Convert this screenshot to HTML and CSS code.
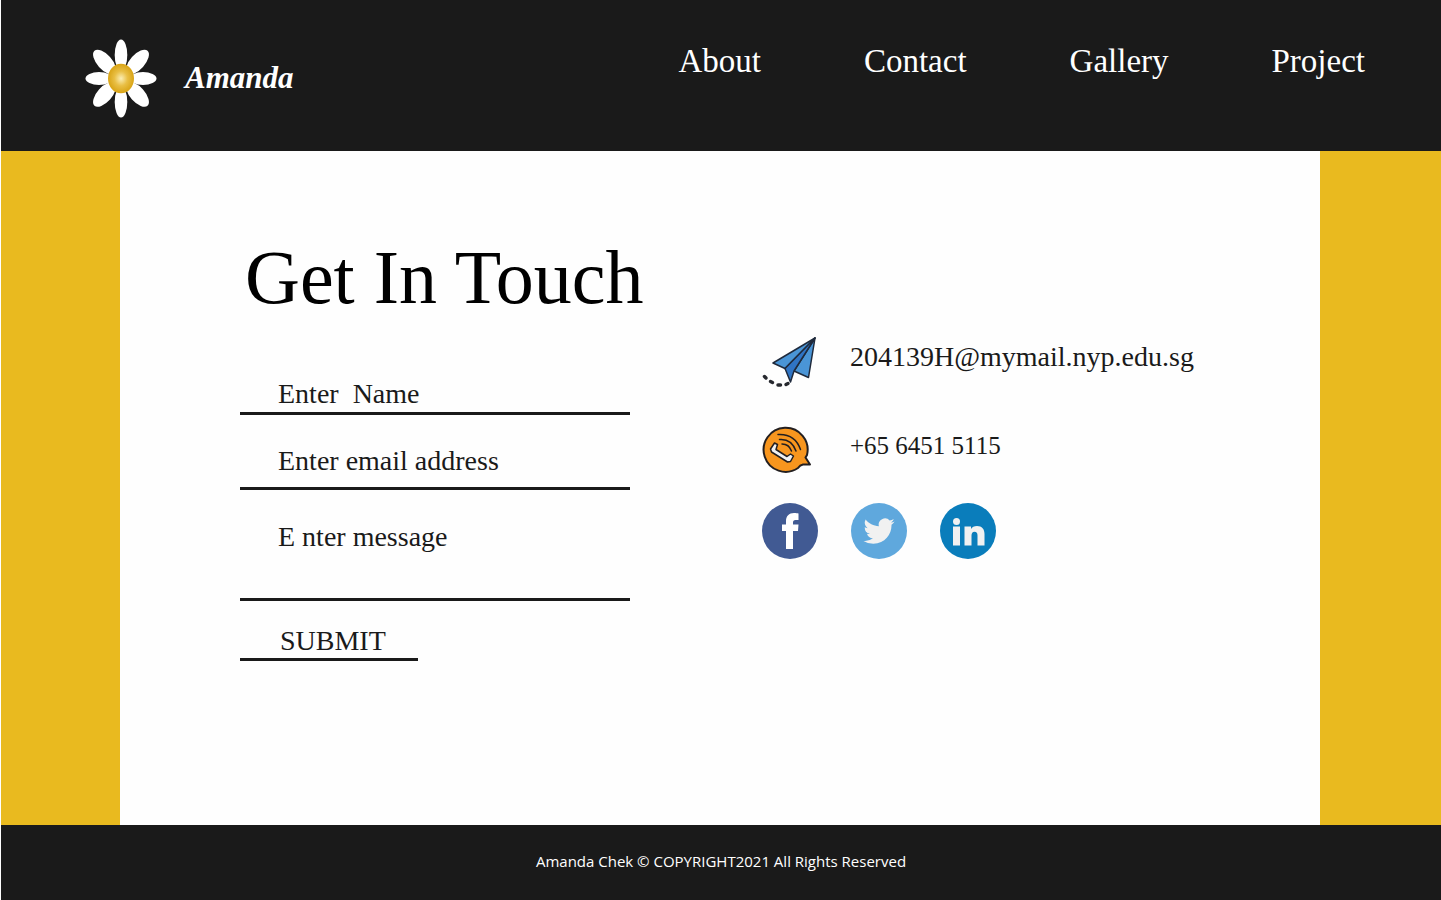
FILE: index.html
```html
<!DOCTYPE html>
<html lang="en">
<head>
  <meta charset="utf-8">
  <meta name="viewport" content="width=device-width, initial-scale=1">
  <title>Amanda – Contact</title>
  <link rel="stylesheet" href="styles.css">
</head>
<body>
  <header class="site-header">
    <a class="brand" href="#">
      <svg class="brand-mark" viewBox="0 0 72 80" aria-hidden="true">
        <defs>
          <radialGradient id="core">
            <stop offset="0" stop-color="#fbeeb4"/>
            <stop offset="0.5" stop-color="#e9bf45"/>
            <stop offset="1" stop-color="#d9a415"/>
          </radialGradient>
        </defs>
        <g fill="#fff">
          <ellipse cx="36" cy="17" rx="6.300" ry="15.500"/>
          <ellipse cx="36" cy="64" rx="6.300" ry="15.500"/>
          <ellipse cx="14" cy="40.500" rx="13.500" ry="6.500"/>
          <ellipse cx="58" cy="40.500" rx="13.500" ry="6.500"/>
          <ellipse cx="19.500" cy="24" rx="7.400" ry="15" transform="rotate(-42 19.500 24)"/>
          <ellipse cx="52.500" cy="24" rx="7.400" ry="15" transform="rotate(42 52.500 24)"/>
          <ellipse cx="19.500" cy="56.500" rx="7.400" ry="15" transform="rotate(42 19.500 56.500)"/>
          <ellipse cx="52.500" cy="56.500" rx="7.400" ry="15" transform="rotate(-42 52.500 56.500)"/>
        </g>
        <ellipse cx="36" cy="40.500" rx="13" ry="14.700" fill="url(#core)"/>
      </svg>
      <span class="brand-name">Amanda</span>
    </a>
    <nav class="site-nav" aria-label="Main">
      <a href="#about">About</a>
      <a href="#contact">Contact</a>
      <a href="#gallery">Gallery</a>
      <a href="#project">Project</a>
    </nav>
  </header>

  <main class="page">
    <div class="panel">
      <section class="touch">
        <h1 class="title">Get In Touch</h1>
        <form class="form">
          <input class="field field-name" type="text" aria-label="Name" placeholder="Enter  Name">
          <input class="field field-email" type="email" aria-label="Email address" placeholder="Enter email address">
          <textarea class="field field-message" rows="1" aria-label="Message" placeholder="E nter message"></textarea>
          <button class="submit" type="submit">SUBMIT</button>
        </form>
      </section>

      <section class="contact" aria-label="Contact details">
        <a class="contact-row" href="mailto:204139H@mymail.nyp.edu.sg">
          <svg class="contact-icon" viewBox="0 0 56 59" aria-hidden="true">
            <g stroke="#1f2a3c" stroke-width="1.500" stroke-linejoin="round">
              <path d="M53 2 11 27 23 32.500Z" fill="#4a95d6"/>
              <path d="M53 2 32 35 46.500 41.500Z" fill="#4a95d6"/>
              <path d="M53 2 23 32.500 28.500 46 32 35Z" fill="#2f74c4"/>
            </g>
            <path d="M2.500 40.500 4 42M8.500 45.500 10.500 46.500M16 49h2.500M24 48.500 26 47.500" fill="none" stroke="#26282e" stroke-width="3.500" stroke-linecap="round"/>
          </svg>
          <span>204139H@mymail.nyp.edu.sg</span>
        </a>
        <a class="contact-row phone" href="tel:+6564515115">
          <svg class="contact-icon" viewBox="0 0 56 48" aria-hidden="true">
            <path d="M45 30A22 22 0 1 0 36 43Q38 40 41 39.500L48 39.500 43.500 32.500Z" fill="#f8961e" stroke="#231f20" stroke-width="2" stroke-linejoin="round"/>
            <path d="M15.500 19.500 12.500 18 8.500 24 9.500 27 25.500 37 28.500 36.500 31.500 31 28.500 29 25 31.500 14 24.500Z" fill="#f1f1f1" stroke="#231f20" stroke-width="1.500" stroke-linejoin="round"/>
            <path d="M16 9.500q17-1 22.500 15M17.500 14.500q12-1 16.500 11.500M20 19q7 0 9.500 7" fill="none" stroke="#231f20" stroke-width="1.500" stroke-linecap="round"/>
          </svg>
          <span>+65 6451 5115</span>
        </a>
        <div class="social">
          <a href="#facebook" aria-label="Facebook">
            <svg class="social-icon" viewBox="0 0 56 56" aria-hidden="true">
              <circle cx="28" cy="28" r="28" fill="#415a93"/>
              <path d="M24 46V28H20v-6.500h4V18c0-5 3-8 8-8 2 0 3.500.200 4.500.500V17h-3c-1.800 0-2.500 1-2.500 2.500v2H36.500L36 28h-5v18Z" fill="#fff"/>
            </svg>
          </a>
          <a href="#twitter" aria-label="Twitter">
            <svg class="social-icon" viewBox="0 0 56 56" aria-hidden="true">
              <circle cx="28" cy="28" r="28" fill="#5fa8dd"/>
              <path transform="translate(12.500 12.500) scale(1.300)" d="M23.950 4.570a10 10 0 0 1-2.820.770 4.960 4.960 0 0 0 2.160-2.720 10 10 0 0 1-3.130 1.190 4.920 4.920 0 0 0-8.380 4.480C7.690 8.090 4.070 6.130 1.640 3.160a4.920 4.920 0 0 0 1.520 6.570 4.900 4.900 0 0 1-2.230-.610v.060a4.920 4.920 0 0 0 3.950 4.830 5 5 0 0 1-2.210.080 4.940 4.940 0 0 0 4.600 3.420A9.870 9.870 0 0 1 0 19.540a14 14 0 0 0 7.550 2.210c9.050 0 14-7.500 14-13.980l-.020-.640a10 10 0 0 0 2.420-2.560Z" fill="#f1f1f1"/>
            </svg>
          </a>
          <a href="#linkedin" aria-label="LinkedIn">
            <svg class="social-icon" viewBox="0 0 56 56" aria-hidden="true">
              <circle cx="28" cy="28" r="28" fill="#0a7dbb"/>
              <g fill="#f1f1f1">
                <circle cx="16.500" cy="18.500" r="3.500"/>
                <path d="M13 23.500h7V42.500h-7ZM24.500 23.500H31v2.500c1-2 3.200-3 6-3 5 0 7.500 3 7.500 8V42.500h-7V32.500c0-2.500-.900-3.700-3-3.700-2 0-3 1.400-3 3.700v10h-7Z"/>
              </g>
            </svg>
          </a>
        </div>
      </section>
    </div>
  </main>

  <footer class="site-footer">
    <p>Amanda Chek © COPYRIGHT2021 All Rights Reserved</p>
  </footer>
</body>
</html>
```
FILE: styles.css
```css
* {
  box-sizing: border-box;
}

body {
  display: flex;
  flex-direction: column;
  min-height: 100vh;
  margin: 0;
  padding-left: 1px;
  background: #fff;
  color: #1a1a1a;
  font-family: "Liberation Serif", "Times New Roman", serif;
  font-size: 28px;
  line-height: 32px;
}

a {
  color: inherit;
  text-decoration: none;
}

svg {
  display: block;
}

.site-header {
  display: flex;
  justify-content: space-between;
  align-items: flex-start;
  padding: 38px 76px 33px 84px;
  background: #1a1a1a;
  color: #fff;
}

.brand {
  display: flex;
  align-items: center;
  gap: 28px;
}

.brand-mark {
  width: 72px;
  height: 80px;
}

.brand-name {
  font-size: 31px;
  font-style: italic;
  font-weight: 700;
}

.site-nav {
  display: flex;
  gap: 103px;
  padding-top: 4px;
  font-size: 33px;
  line-height: 38px;
}

.page {
  display: flex;
  flex: 1;
  padding: 0 121px 0 119px;
  background: #e9ba1f;
}

.panel {
  display: grid;
  flex: 1;
  grid-template-columns: minmax(0, 390fr) minmax(0, 438fr);
  gap: 132px;
  align-items: start;
  padding: 82px 120px;
  background: #fefefe;
}

.title {
  margin: 0;
  padding-left: 5px;
  color: #000;
  font-size: 76px;
  font-weight: 400;
  line-height: 88px;
  white-space: nowrap;
}

.form {
  display: flex;
  flex-direction: column;
  align-items: flex-start;
  padding-top: 57px;
}

.field,
.submit {
  width: 100%;
  margin: 0;
  border: 0;
  border-bottom: 3px solid #1a1a1a;
  border-radius: 0;
  background: none;
  color: inherit;
  font: inherit;
  outline-offset: 4px;
}

.field::placeholder {
  color: inherit;
  opacity: 1;
}

.field-name {
  padding: 0 0 2px 38px;
}

.field-email {
  padding: 30px 0 10px 38px;
}

.field-message {
  height: 111px;
  padding: 31px 0 0 38px;
  overflow: hidden;
  resize: none;
}

.submit {
  width: 178px;
  margin-top: 24px;
  padding: 0 0 1px 40px;
  text-align: left;
}

.contact {
  display: flex;
  flex-direction: column;
  gap: 30px;
  padding-top: 103px;
}

.contact-row {
  display: flex;
  align-items: flex-start;
  gap: 32px;
}

.contact-row span {
  padding-top: 5px;
}

.contact-icon {
  flex: none;
  width: 56px;
}

.phone {
  font-size: 25px;
}

.social {
  display: flex;
  gap: 33px;
}

.social-icon {
  width: 56px;
  height: 56px;
}

.site-footer {
  padding: 28px 16px 31px;
  background: #1a1a1a;
  color: #fff;
  font-family: "Open Sans", sans-serif;
  font-size: 15px;
  line-height: 16px;
  text-align: center;
}

.site-footer p {
  margin: 0;
}
```
